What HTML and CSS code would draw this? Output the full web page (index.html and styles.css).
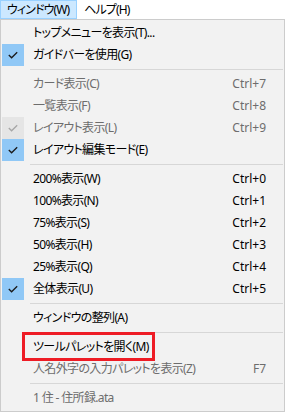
FILE: index.html
```html
<!DOCTYPE html>
<html lang="ja">
<head>
<meta charset="utf-8">
<link rel="stylesheet" href="styles.css">
</head>
<body>
<div class="menubar">
  <div class="top-item active">ウィンドウ(W)</div>
  <div class="top-item">ヘルプ(H)</div>
</div>
<div class="menu">
  <div class="item"><span class="gutter"></span><span class="label">トップメニューを表示(T)...</span><span class="key"></span></div>
  <div class="item"><span class="gutter"><span class="check"><svg width="10" height="8" viewBox="0 0 10 8"><path d="M0.8 4 L3.6 6.8 L9.2 1.2" fill="none" stroke="currentColor" stroke-width="1.3"/></svg></span></span><span class="label">ガイドバーを使用(G)</span><span class="key"></span></div>
  <div class="sep"></div>
  <div class="item disabled"><span class="gutter"></span><span class="label">カード表示(C)</span><span class="key">Ctrl+7</span></div>
  <div class="item disabled"><span class="gutter"></span><span class="label">一覧表示(F)</span><span class="key">Ctrl+8</span></div>
  <div class="item disabled"><span class="gutter"><span class="check"><svg width="10" height="8" viewBox="0 0 10 8"><path d="M0.8 4 L3.6 6.8 L9.2 1.2" fill="none" stroke="currentColor" stroke-width="1.3"/></svg></span></span><span class="label">レイアウト表示(L)</span><span class="key">Ctrl+9</span></div>
  <div class="item"><span class="gutter"><span class="check"><svg width="10" height="8" viewBox="0 0 10 8"><path d="M0.8 4 L3.6 6.8 L9.2 1.2" fill="none" stroke="currentColor" stroke-width="1.3"/></svg></span></span><span class="label">レイアウト編集モード(E)</span><span class="key"></span></div>
  <div class="sep"></div>
  <div class="item"><span class="gutter"></span><span class="label">200%表示(W)</span><span class="key">Ctrl+0</span></div>
  <div class="item"><span class="gutter"></span><span class="label">100%表示(N)</span><span class="key">Ctrl+1</span></div>
  <div class="item"><span class="gutter"></span><span class="label">75%表示(S)</span><span class="key">Ctrl+2</span></div>
  <div class="item"><span class="gutter"></span><span class="label">50%表示(H)</span><span class="key">Ctrl+3</span></div>
  <div class="item"><span class="gutter"></span><span class="label">25%表示(Q)</span><span class="key">Ctrl+4</span></div>
  <div class="item"><span class="gutter"><span class="check"><svg width="10" height="8" viewBox="0 0 10 8"><path d="M0.8 4 L3.6 6.8 L9.2 1.2" fill="none" stroke="currentColor" stroke-width="1.3"/></svg></span></span><span class="label">全体表示(U)</span><span class="key">Ctrl+5</span></div>
  <div class="sep"></div>
  <div class="item"><span class="gutter"></span><span class="label">ウィンドウの整列(A)</span><span class="key"></span></div>
  <div class="sep"></div>
  <div class="item"><span class="gutter"></span><span class="label">ツールパレットを開く(M)</span><span class="key"></span></div>
  <div class="item disabled"><span class="gutter"></span><span class="label">人名外字の入力パレットを表示(Z)</span><span class="key">F7</span></div>
  <div class="sep"></div>
  <div class="item disabled"><span class="gutter"></span><span class="label">1 住 - 住所録.ata</span><span class="key"></span></div>
  <div class="highlight-box"></div>
</div>
</body>
</html>
```

FILE: styles.css
```css
html, body {
  margin: 0;
  padding: 0;
  background: #ffffff;
}
body {
  width: 285px;
  height: 412px;
  overflow: hidden;
  font-family: "Noto Sans", "Noto Sans CJK JP", sans-serif;
  font-size: 12px;
  color: #000;
  font-feature-settings: "palt";
}
.menubar {
  display: flex;
  height: 19px;
  background: #fff;
}
.top-item {
  box-sizing: border-box;
  height: 19px;
  padding: 0 7px 0 6px;
  line-height: 17px;
  border: 1px solid transparent;
  white-space: nowrap;
  letter-spacing: -0.9px;
}
.top-item.active {
  background: #cce8ff;
  border-color: #99d1ff;
}
.menu {
  position: relative;
  box-sizing: border-box;
  height: 393px;
  width: 285px;
  background: #f2f2f2;
  border: 1px solid #cccccc;
  padding: 2px 0 1px;
}
.item {
  display: flex;
  align-items: center;
  height: 22px;
  white-space: nowrap;
}
.gutter {
  width: 32px;
  height: 22px;
  flex: none;
  display: flex;
  padding-left: 1px;
  box-sizing: border-box;
}
.check {
  width: 22px;
  height: 22px;
  background: #90c8f6;
  display: flex;
  align-items: center;
  justify-content: center;
  color: #1a1a1a;
}
.label {
  flex: 1;
  line-height: 22px;
  letter-spacing: -0.65px;
}
.key {
  padding-right: 18px;
  text-align: right;
  line-height: 22px;
}
.disabled {
  color: #6d6d6d;
}
.disabled .check {
  background: #e5e5e5;
  color: #a6a6a6;
}
.sep {
  height: 1px;
  margin: 3px 1px 3px 29px;
  background: #d7d7d7;
}
.highlight-box {
  position: absolute;
  left: 21px;
  top: 312px;
  width: 133px;
  height: 29px;
  box-sizing: border-box;
  border: 3px solid #ee1c25;
}
```
